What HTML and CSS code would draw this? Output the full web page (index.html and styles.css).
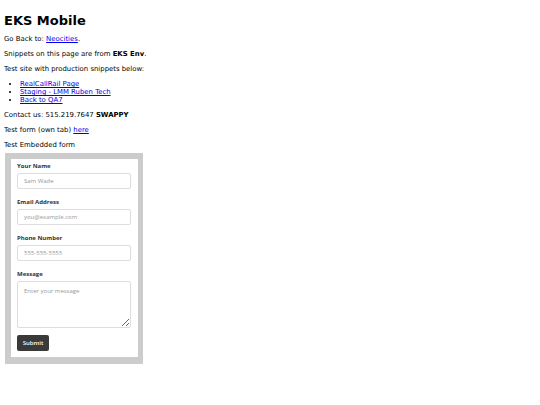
FILE: index.html
```html
<!DOCTYPE html>
<html>
<head>
<meta charset="utf-8">
<title>EKS Mobile</title>
<link rel="stylesheet" href="styles.css">
</head>
<body>
<h1 class="title">EKS Mobile</h1>
<p>Go Back to: <a href="#">Neocities</a>.</p>
<p>Snippets on this page are from <b>EKS Env</b>.</p>
<p>Test site with production snippets below:</p>
<ul class="links">
  <li><a href="#">RealCallRail Page</a></li>
  <li><a href="#">Staging - LMM Ruben Tech</a></li>
  <li><a href="#">Back to QA7</a></li>
</ul>
<p>Contact us: 515.219.7647 <b>SWAPPY</b></p>
<p>Test form (own tab) <a href="#">here</a></p>
<p class="last">Test Embedded form</p>
<div class="frame">
  <form class="form">
    <div class="field">
      <label class="label">Your Name</label>
      <input class="input" type="text" placeholder="Sam Wade">
    </div>
    <div class="field">
      <label class="label">Email Address</label>
      <input class="input" type="text" placeholder="you@example.com">
    </div>
    <div class="field">
      <label class="label">Phone Number</label>
      <input class="input" type="text" placeholder="555-555-5555">
    </div>
    <div class="field">
      <label class="label">Message</label>
      <textarea class="input textarea" placeholder="Enter your message"></textarea>
    </div>
    <button class="submit" type="button">Submit</button>
  </form>
</div>
</body>
</html>
```
FILE: styles.css
```css
body {
  margin: 4px;
  font-family: "DejaVu Sans", Verdana, sans-serif;
  font-size: 6.9px;
  color: #000;
}
.title {
  font-size: 13px;
  margin: 9px 0 7px;
}
p {
  margin: 7px 0;
}
p.last {
  margin-bottom: 4px;
}
a {
  color: #0000ee;
}
.links {
  margin: 6px 0 7px;
  padding-left: 16px;
}
.frame {
  margin-left: 1px;
  width: 127px;
  background: #fff;
  border: 6px solid #cccccc;
  border-right-width: 5px;
  border-bottom-width: 7px;
  height: 198px;
  box-sizing: content-box;
}
.form {
  padding: 3px 6px 0 6px;
  font-family: "Open Sans", sans-serif;
}
.field {
  display: flex;
  flex-direction: column;
  margin-bottom: 9px;
}
.label {
  font-size: 6px;
  font-weight: 700;
  color: #333;
  line-height: 8px;
  margin-bottom: 3px;
}
.input {
  box-sizing: border-box;
  width: 114px;
  height: 16px;
  border: 1px solid #dddddd;
  border-radius: 2px;
  padding: 0 6px;
  font-family: "Open Sans", sans-serif;
  font-size: 6px;
  color: #333;
  outline: none;
  margin: 0;
}
.input::placeholder {
  color: #999;
}
.textarea {
  height: 47px;
  padding: 5px 6px;
  resize: vertical;
}
.submit {
  margin-top: -2px;
  width: 32px;
  height: 16px;
  border: none;
  border-radius: 2px;
  background: #3a3a3a;
  color: #fff;
  font-family: "Open Sans", sans-serif;
  font-size: 6px;
  font-weight: 600;
  padding: 0;
}
```
